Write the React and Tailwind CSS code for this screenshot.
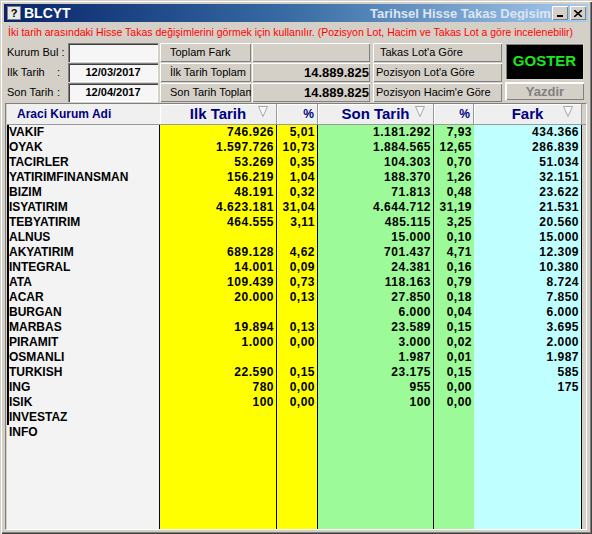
import React from "react";

const rows = [
  ["VAKIF", "746.926", "5,01", "1.181.292", "7,93", "434.366"],
  ["OYAK", "1.597.726", "10,73", "1.884.565", "12,65", "286.839"],
  ["TACIRLER", "53.269", "0,35", "104.303", "0,70", "51.034"],
  ["YATIRIMFINANSMAN", "156.219", "1,04", "188.370", "1,26", "32.151"],
  ["BIZIM", "48.191", "0,32", "71.813", "0,48", "23.622"],
  ["ISYATIRIM", "4.623.181", "31,04", "4.644.712", "31,19", "21.531"],
  ["TEBYATIRIM", "464.555", "3,11", "485.115", "3,25", "20.560"],
  ["ALNUS", "", "", "15.000", "0,10", "15.000"],
  ["AKYATIRIM", "689.128", "4,62", "701.437", "4,71", "12.309"],
  ["INTEGRAL", "14.001", "0,09", "24.381", "0,16", "10.380"],
  ["ATA", "109.439", "0,73", "118.163", "0,79", "8.724"],
  ["ACAR", "20.000", "0,13", "27.850", "0,18", "7.850"],
  ["BURGAN", "", "", "6.000", "0,04", "6.000"],
  ["MARBAS", "19.894", "0,13", "23.589", "0,15", "3.695"],
  ["PIRAMIT", "1.000", "0,00", "3.000", "0,02", "2.000"],
  ["OSMANLI", "", "", "1.987", "0,01", "1.987"],
  ["TURKISH", "22.590", "0,15", "23.175", "0,15", "585"],
  ["ING", "780", "0,00", "955", "0,00", "175"],
  ["ISIK", "100", "0,00", "100", "0,00", ""],
  ["INVESTAZ", "", "", "", "", ""],
  ["INFO", "", "", "", "", ""],
];

// widths / colours of the data columns after the name column
const cols = [
  "w-[117px] bg-[#ffff00] border-r border-black",
  "w-[41px] bg-[#ffff00] border-r border-black",
  "w-[116px] bg-[#9cfa98] border-r border-black",
  "w-[40px] bg-[#9cfa98]",
  "w-[108px] bg-[#c0ffff] border-r border-black",
];

const raised = "shadow-[inset_1px_1px_0_#ffffff,inset_-1px_-1px_0_#808080]";
const sunken =
  "shadow-[inset_1px_1px_0_#808080,inset_2px_2px_0_#404040,inset_-1px_-1px_0_#ffffff]";

function Tri() {
  return (
    <svg width="10" height="11" viewBox="0 0 10 11" className="shrink-0">
      <polygon points="0.5,0.5 9.5,0.5 5,10.5" fill="#f8f8f8" stroke="#a8a8a8" strokeWidth="1" />
    </svg>
  );
}

function HeadCell({ label, w, sort }) {
  return (
    <div
      className={`${w} h-full flex items-center bg-[#efefef] border-r border-[#9a9a9a] shadow-[inset_1px_1px_0_#ffffff] ${
        sort ? "justify-center relative" : "justify-end pr-[3px]"
      }`}
    >
      <span className={`text-[#000080] font-bold ${sort ? "text-[15px]" : "text-[12px]"}`}>{label}</span>
      {sort && (
        <span className="absolute right-[8px] top-[2px]">
          <Tri />
        </span>
      )}
    </div>
  );
}

export default function App() {
  return (
    <div className="w-[592px] h-[534px] bg-[#d4d0c8] p-[4px] flex flex-col [font-family:'Liberation_Sans',Arial,sans-serif] shadow-[inset_1px_1px_0_#d4d0c8,inset_2px_2px_0_#ffffff,inset_-1px_-1px_0_#404040,inset_-2px_-2px_0_#808080] overflow-hidden">
      {/* Title bar */}
      <div className="h-[18px] flex items-center bg-gradient-to-r from-[#0a246a] via-[#3a6ea5] to-[#a6caf0] pl-[3px] pr-[2px] shrink-0">
        <div className="w-[14px] h-[14px] bg-[#e8e8e8] border border-[#808080] flex items-center justify-center text-[11px] font-bold leading-none text-black">
          ?
        </div>
        <span className="ml-[3px] text-white font-bold text-[14px] leading-none">BLCYT</span>
        <div className="flex-1" />
        <div className="w-[182px] overflow-hidden whitespace-nowrap text-[13px] font-bold text-[#dde6f0] leading-none">
          Tarihsel Hisse Takas Degisim
        </div>
        <div className={`w-[16px] h-[14px] bg-[#d4d0c8] ${raised} flex items-end justify-center pb-[3px]`}>
          <div className="w-[6px] h-[2px] bg-black" />
        </div>
        <div className={`ml-[2px] w-[16px] h-[14px] bg-[#d4d0c8] ${raised} flex items-center justify-center`}>
          <svg width="8" height="7" viewBox="0 0 8 7">
            <path d="M0 0L8 7M8 0L0 7" stroke="black" strokeWidth="1.6" />
          </svg>
        </div>
      </div>

      {/* Info line */}
      <div className="h-[21px] flex items-center pl-[4px] text-[10.5px] text-[#ff0000] whitespace-nowrap shrink-0">
        İki tarih arasındaki Hisse Takas değişimlerini görmek için kullanılır. (Pozisyon Lot, Hacim ve Takas Lot a göre incelenebilir)
      </div>

      {/* Controls */}
      <div className="flex h-[59px] shrink-0 text-[11px] text-black">
        <div className="w-[64px] pl-[3px] flex flex-col gap-[1px]">
          <div className="h-[19px] flex items-center">Kurum Bul :</div>
          <div className="h-[19px] flex items-center">
            <span className="w-[50px]">Ilk Tarih</span>:
          </div>
          <div className="h-[19px] flex items-center">
            <span className="w-[50px]">Son Tarih</span>:
          </div>
        </div>
        <div className="w-[90px] flex flex-col gap-[1px]">
          <div className={`h-[19px] bg-[#f6f6f6] ${sunken}`} />
          <div className={`h-[19px] bg-[#f6f6f6] ${sunken} flex items-center justify-center font-bold`}>12/03/2017</div>
          <div className={`h-[19px] bg-[#f6f6f6] ${sunken} flex items-center justify-center font-bold`}>12/04/2017</div>
        </div>
        <div className="ml-[2px] w-[91px] flex flex-col gap-[1px]">
          {["Toplam Fark", "İlk Tarih Toplam", "Son Tarih Toplam"].map((t) => (
            <div key={t} className={`h-[19px] bg-[#d4d0c8] ${raised} flex items-center pl-[10px] whitespace-nowrap overflow-hidden`}>
              {t}
            </div>
          ))}
        </div>
        <div className="ml-[1px] w-[118px] flex flex-col gap-[1px]">
          {["", "14.889.825", "14.889.825"].map((t, i) => (
            <div key={i} className={`h-[19px] bg-[#d4d0c8] ${raised} flex items-center justify-end pr-[1px] font-bold text-[13px]`}>
              {t}
            </div>
          ))}
        </div>
        <div className="ml-[3px] w-[129px] flex flex-col gap-[1px]">
          {["Takas Lot'a Göre", "Pozisyon Lot'a Göre", "Pozisyon Hacim'e Göre"].map((t, i) => (
            <div key={t} className={`h-[19px] bg-[#d4d0c8] ${raised} flex items-center ${i === 0 ? "pl-[7px]" : "pl-[3px]"} whitespace-nowrap`}>
              {t}
            </div>
          ))}
        </div>
        <div className="ml-[3px] w-[79px] flex flex-col gap-[2px]">
          <div className="h-[37px] bg-black border border-[#d8d8d8] shadow-[inset_1px_1px_0_#808080] flex items-center justify-center text-[15px] font-bold text-[#1ee61e]">
            GOSTER
          </div>
          <div className={`h-[18px] bg-[#d4d0c8] ${raised} border-t border-l border-[#ffffff] flex items-center justify-center text-[13px] font-bold text-[#808080]`}>
            Yazdir
          </div>
        </div>
      </div>

      {/* Grid */}
      <div className="mt-[1px] ml-[1px] w-[582px] flex-1 flex flex-col border border-t-[#808080] border-l-[#808080] border-r-[#ffffff] border-b-[#ffffff] pl-[1px] bg-[#d4d0c8]">
        <div className="h-[21px] flex shrink-0 border-b border-[#9a9a9a]">
          <div className="w-[153px] h-full flex items-center pl-[10px] bg-[#f0f0f0] text-[12px] font-bold text-[#000080]">
            Araci Kurum Adi
          </div>
          <HeadCell label="Ilk Tarih" w="w-[117px]" sort />
          <HeadCell label="%" w="w-[41px]" />
          <HeadCell label="Son Tarih" w="w-[116px]" sort />
          <HeadCell label="%" w="w-[40px]" />
          <HeadCell label="Fark" w="w-[108px]" sort />
        </div>
        {rows.map((r, ri) => (
          <div key={r[0]} className="h-[15px] flex shrink-0 text-[12px] font-bold leading-[15px] text-black">
            <div
              className={`w-[153px] bg-[#f3f3f3] border-r border-black whitespace-nowrap overflow-hidden ${
                ri < 20 ? "border-l-2 border-l-black" : "pl-[2px]"
              }`}
            >
              {r[0]}
            </div>
            {r.slice(1).map((v, ci) => (
              <div key={ci} className={`${cols[ci]} text-right pr-[2px] tracking-[0.5px]`}>
                {v}
              </div>
            ))}
          </div>
        ))}
        <div className="flex-1 flex">
          <div className="w-[153px] bg-[#f3f3f3] border-r border-black" />
          {cols.map((c, i) => (
            <div key={i} className={c} />
          ))}
        </div>
      </div>
    </div>
  );
}
